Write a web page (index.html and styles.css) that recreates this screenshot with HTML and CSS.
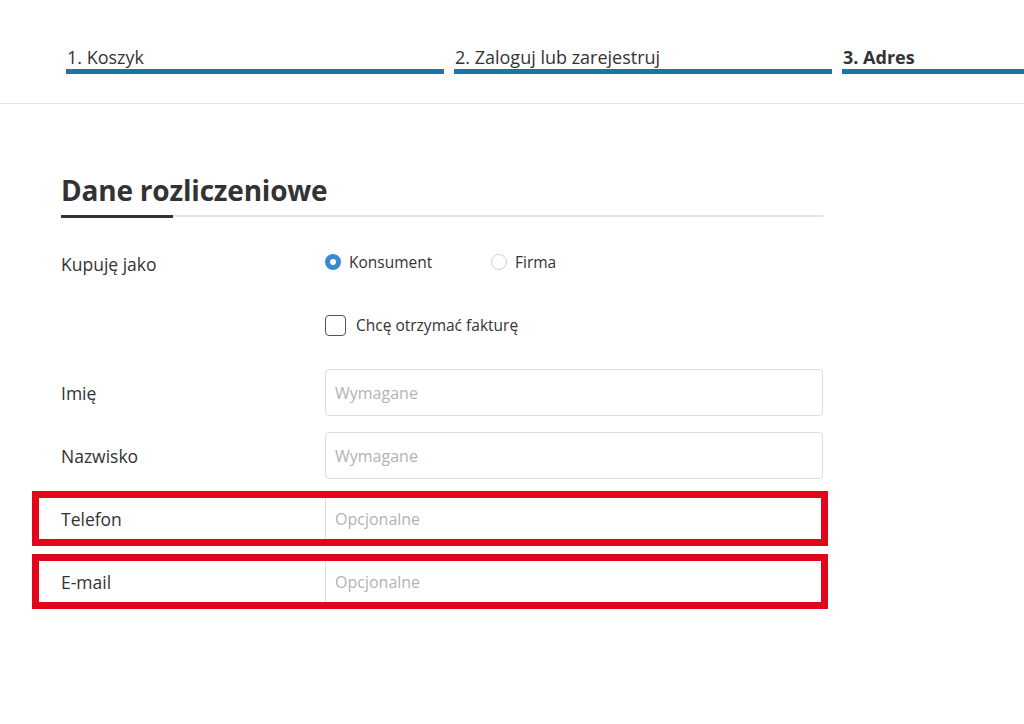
FILE: index.html
```html
<!DOCTYPE html>
<html lang="pl">
<head>
<meta charset="utf-8">
<title>Dane rozliczeniowe</title>
<link rel="stylesheet" href="styles.css">
</head>
<body>
<header class="steps-bar">
  <nav class="steps">
    <div class="step">1. Koszyk</div>
    <div class="step">2. Zaloguj lub zarejestruj</div>
    <div class="step step-current">3. Adres</div>
  </nav>
</header>
<main class="section">
  <h1 class="title">Dane rozliczeniowe</h1>
  <div class="title-rule"></div>

  <div class="row row-radio">
    <div class="label">Kupuję jako</div>
    <div class="field radios">
      <label class="radio"><span class="dot dot-on"></span>Konsument</label>
      <label class="radio"><span class="dot"></span>Firma</label>
    </div>
  </div>

  <div class="row row-check">
    <div class="label"></div>
    <div class="field">
      <label class="check"><span class="box"></span>Chcę otrzymać fakturę</label>
    </div>
  </div>

  <div class="row row-input">
    <div class="label">Imię</div>
    <div class="input"><span class="ph">Wymagane</span></div>
  </div>
  <div class="row row-input">
    <div class="label">Nazwisko</div>
    <div class="input"><span class="ph">Wymagane</span></div>
  </div>
  <div class="row row-input marked">
    <div class="label">Telefon</div>
    <div class="input"><span class="ph">Opcjonalne</span></div>
  </div>
  <div class="row row-input marked">
    <div class="label">E-mail</div>
    <div class="input"><span class="ph">Opcjonalne</span></div>
  </div>
</main>
</body>
</html>
```

FILE: styles.css
```css
html, body {
  margin: 0;
  padding: 0;
  background: #ffffff;
  overflow: hidden;
}
body {
  width: 1024px;
  height: 724px;
  font-family: "Open Sans", "Lato", sans-serif;
  color: #333333;
}
.steps-bar {
  height: 103px;
  border-bottom: 1px solid #e4e4e4;
  box-sizing: content-box;
  overflow: hidden;
}
.steps {
  display: flex;
  gap: 10px;
  padding: 46px 0 0 66px;
}
.step {
  flex: 0 0 378px;
  font-size: 18px;
  line-height: 22px;
  padding-left: 1px;
  padding-bottom: 1px;
  border-bottom: 5px solid #1678aa;
  color: #333;
  box-sizing: border-box;
  white-space: nowrap;
}
.step-current {
  font-weight: 700;
}
.section {
  width: 762px;
  margin-left: 61px;
  padding-top: 70px;
}
.title {
  margin: 0;
  font-size: 28px;
  line-height: 32px;
  font-weight: 700;
  color: #333;
  letter-spacing: -0.2px;
}
.title-rule {
  margin-top: 10px;
  height: 2px;
  background: #e3e3e3;
}
.title-rule::before {
  content: "";
  display: block;
  width: 112px;
  height: 3px;
  margin-top: -1px;
  background: #333;
}
.row {
  display: flex;
  align-items: center;
  position: relative;
}
.label {
  flex: 0 0 264px;
  font-size: 17.5px;
  color: #333;
}
.field {
  flex: 1;
}
.row-radio {
  margin-top: 27px;
  height: 40px;
}
.radios {
  display: flex;
  margin-top: -4px;
}
.radio {
  display: flex;
  align-items: center;
  font-size: 15.5px;
  width: 166px;
}
.dot {
  width: 16px;
  height: 16px;
  border-radius: 50%;
  border: 1px solid #cfcfcf;
  box-sizing: border-box;
  margin-right: 8px;
  background: #fff;
}
.dot-on {
  border: 5px solid #3a88cf;
}
.row-check {
  margin-top: 21px;
  height: 40px;
}
.check {
  display: flex;
  align-items: center;
  font-size: 15.5px;
}
.box {
  width: 21px;
  height: 21px;
  border: 1.5px solid #555;
  border-radius: 4px;
  box-sizing: border-box;
  margin-right: 10px;
}
.row-input {
  margin-top: 16px;
}
.row-check + .row-input {
  margin-top: 24px;
}
.input {
  flex: 0 0 498px;
  height: 47px;
  border: 1px solid #dedede;
  border-radius: 4px;
  box-sizing: border-box;
  display: flex;
  align-items: center;
  padding-left: 9px;
}
.ph {
  font-size: 16px;
  color: #b3b3b3;
}
.marked::after {
  content: "";
  position: absolute;
  left: -29px;
  right: -5px;
  top: -4px;
  bottom: -4px;
  border: 7px solid #e2061a;
  pointer-events: none;
}
```
